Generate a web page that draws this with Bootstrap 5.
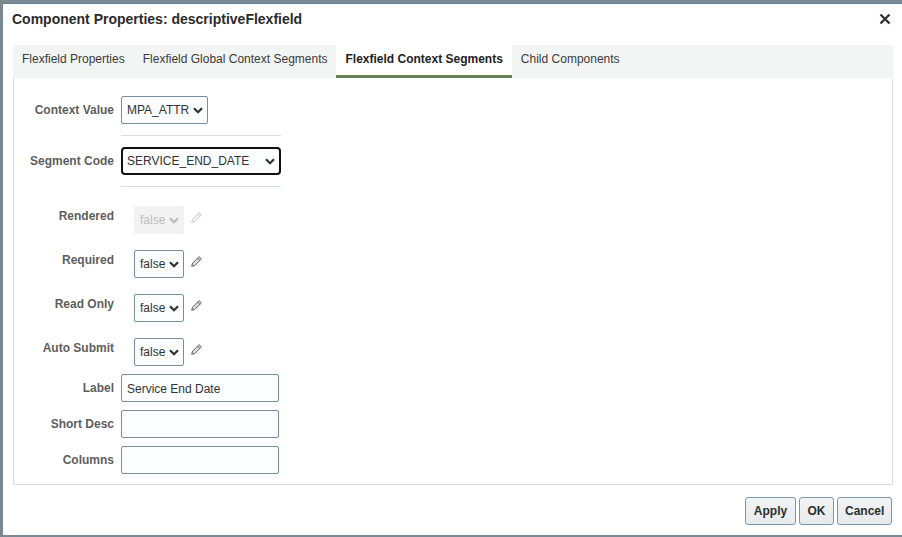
<!DOCTYPE html>
<html lang="en">
<head>
<meta charset="utf-8">
<title>Component Properties</title>
<link href="https://cdn.jsdelivr.net/npm/bootstrap@5.3.0/dist/css/bootstrap.min.css" rel="stylesheet">
<style>
html,body{height:537px;overflow:hidden}
body{background:#7b8791;font-family:"Liberation Sans",Arial,sans-serif;font-size:12px;color:#333;padding:3px 0 2px 3px}
.dlg{height:532px;background:#fff;padding:0 9px 0 10px;border-top:1px solid #5f7f98}
.dlg-head{height:41px;padding-top:7px}
.dlg-title{font-size:14px;font-weight:700;color:#2b2b2b;line-height:17px;margin:0 0 0 -1px}
.dlg-close{width:12px;height:12px;margin:2px 2px 0 0;padding:0;border:0;background:none;line-height:0}
.tabbar{height:33px;background:#f3f5f5;align-items:stretch;flex-wrap:nowrap}
.tabbar .nav-link{height:33px;padding:0 9px;font-size:12px;line-height:29px;color:#3a3a3a;border-radius:0}
.tabbar .nav-link.active{background:#fff;color:#222;font-weight:700;border-bottom:3px solid #6a7f56}
.panel-box{height:407px;border:1px solid #d6dfe6;border-top-width:1px;border-top-color:#fff;padding-top:17px}
.lbl{width:100px;margin:0 7px 0 0;font-weight:700;color:#5e5e5e;text-align:right;line-height:14px;flex:none}
.lbl-c{align-self:center}
.lbl-t{margin-top:3px;align-self:flex-start}
.row-ctl{display:flex;align-items:flex-start}
.sel{height:28px;padding:0 18px 0 5px;font-size:12px;line-height:26px;color:#333;border:1px solid #76909f;border-radius:2px;background-color:#fbfdff;
background-image:url("data:image/svg+xml,%3Csvg xmlns='http://www.w3.org/2000/svg' viewBox='0 0 10 7'%3E%3Cpath fill='none' stroke='%23333' stroke-width='2.2' d='M1 1.2l4 4 4-4'/%3E%3C/svg%3E");
background-repeat:no-repeat;background-position:right 4px center;background-size:10px 7px;box-shadow:none}
.sel:disabled{background-color:#f2f2f2;border-color:#f2f2f2;color:#bcbcbc;opacity:1;
background-image:url("data:image/svg+xml,%3Csvg xmlns='http://www.w3.org/2000/svg' viewBox='0 0 10 7'%3E%3Cpath fill='none' stroke='%23bbb' stroke-width='2.2' d='M1 1.2l4 4 4-4'/%3E%3C/svg%3E")}
.w-ctx{width:87px}
.w-seg{width:160px;padding-right:20px;border:2px solid #111;border-radius:4px;padding-left:4px;line-height:24px}
.w-bool{width:50px;margin-left:13px;padding-right:14px}
.rule{width:160px;height:1px;background:#d6dfe6;margin:11px 0 11px 107px}
.bool-rows{display:flex;flex-direction:column;gap:16px;margin-top:19px;margin-bottom:8px}
.pen{width:11px;height:11px;margin:6px 0 0 7px;flex:none}
.txt{width:158px;height:28px;padding:1px 5px 0;font-size:12px;color:#333;border:1px solid #76909f;border-radius:2px;background:#fbfdff;box-shadow:none}
.txt-rows{display:flex;flex-direction:column;gap:8px}
.lbl-i{margin-top:7px}
.foot{gap:3px;padding-top:12px;padding-right:1px}
.act{height:28px;padding:0 7px;font-size:12px;font-weight:700;line-height:26px;color:#2d2d2d;border:1px solid #7d95a6;border-radius:3px;background:linear-gradient(#f2f4f6,#e6eaed)}
.act-a{width:51px}.act-o{width:35px}.act-c{width:55px}
</style>
</head>
<body>
<div class="dlg">
  <div class="dlg-head d-flex justify-content-between align-items-start">
    <h1 class="dlg-title">Component Properties: descriptiveFlexfield</h1>
    <button type="button" class="dlg-close" aria-label="Close"><svg width="12" height="12" viewBox="0 0 12 12"><path d="M1.5 1.5l9 9M10.5 1.5l-9 9" stroke="#333" stroke-width="2.4"/></svg></button>
  </div>
  <ul class="nav tabbar">
    <li class="nav-item"><a class="nav-link" href="#">Flexfield Properties</a></li>
    <li class="nav-item"><a class="nav-link" href="#">Flexfield Global Context Segments</a></li>
    <li class="nav-item"><a class="nav-link active" href="#">Flexfield Context Segments</a></li>
    <li class="nav-item"><a class="nav-link" href="#">Child Components</a></li>
  </ul>
  <div class="panel-box">
    <div class="row-ctl"><label class="lbl lbl-c">Context Value</label><select class="form-select sel w-ctx"><option>MPA_ATTR</option></select></div>
    <div class="rule"></div>
    <div class="row-ctl"><label class="lbl lbl-c">Segment Code</label><select class="form-select sel w-seg"><option>SERVICE_END_DATE</option></select></div>
    <div class="rule"></div>
    <div class="bool-rows">
      <div class="row-ctl"><label class="lbl lbl-t">Rendered</label><select class="form-select sel w-bool" disabled><option>false</option></select>
        <svg class="pen" viewBox="0 0 12 12"><path d="M.8 11.2l.9-3.4L8.2 1.3a1 1 0 0 1 1.4 0l1.1 1.1a1 1 0 0 1 0 1.4L4.2 10.3zM7.2 2.3l2.5 2.5" fill="#f4f4f4" stroke="#c4c4c4"/></svg></div>
      <div class="row-ctl"><label class="lbl lbl-t">Required</label><select class="form-select sel w-bool"><option>false</option></select>
        <svg class="pen" viewBox="0 0 12 12"><path d="M.8 11.2l.9-3.4L8.2 1.3a1 1 0 0 1 1.4 0l1.1 1.1a1 1 0 0 1 0 1.4L4.2 10.3zM7.2 2.3l2.5 2.5" fill="#ddd" stroke="#4d4d4d"/></svg></div>
      <div class="row-ctl"><label class="lbl lbl-t">Read Only</label><select class="form-select sel w-bool"><option>false</option></select>
        <svg class="pen" viewBox="0 0 12 12"><path d="M.8 11.2l.9-3.4L8.2 1.3a1 1 0 0 1 1.4 0l1.1 1.1a1 1 0 0 1 0 1.4L4.2 10.3zM7.2 2.3l2.5 2.5" fill="#ddd" stroke="#4d4d4d"/></svg></div>
      <div class="row-ctl"><label class="lbl lbl-t">Auto Submit</label><select class="form-select sel w-bool"><option>false</option></select>
        <svg class="pen" viewBox="0 0 12 12"><path d="M.8 11.2l.9-3.4L8.2 1.3a1 1 0 0 1 1.4 0l1.1 1.1a1 1 0 0 1 0 1.4L4.2 10.3zM7.2 2.3l2.5 2.5" fill="#ddd" stroke="#4d4d4d"/></svg></div>
    </div>
    <div class="txt-rows">
      <div class="row-ctl"><label class="lbl lbl-i">Label</label><input class="form-control txt" value="Service End Date"></div>
      <div class="row-ctl"><label class="lbl lbl-i">Short Desc</label><input class="form-control txt"></div>
      <div class="row-ctl"><label class="lbl lbl-i">Columns</label><input class="form-control txt"></div>
    </div>
  </div>
  <div class="foot d-flex justify-content-end">
    <button type="button" class="btn act act-a">Apply</button>
    <button type="button" class="btn act act-o">OK</button>
    <button type="button" class="btn act act-c">Cancel</button>
  </div>
</div>
<script src="https://cdn.jsdelivr.net/npm/bootstrap@5.3.0/dist/js/bootstrap.bundle.min.js"></script>
</body>
</html>
